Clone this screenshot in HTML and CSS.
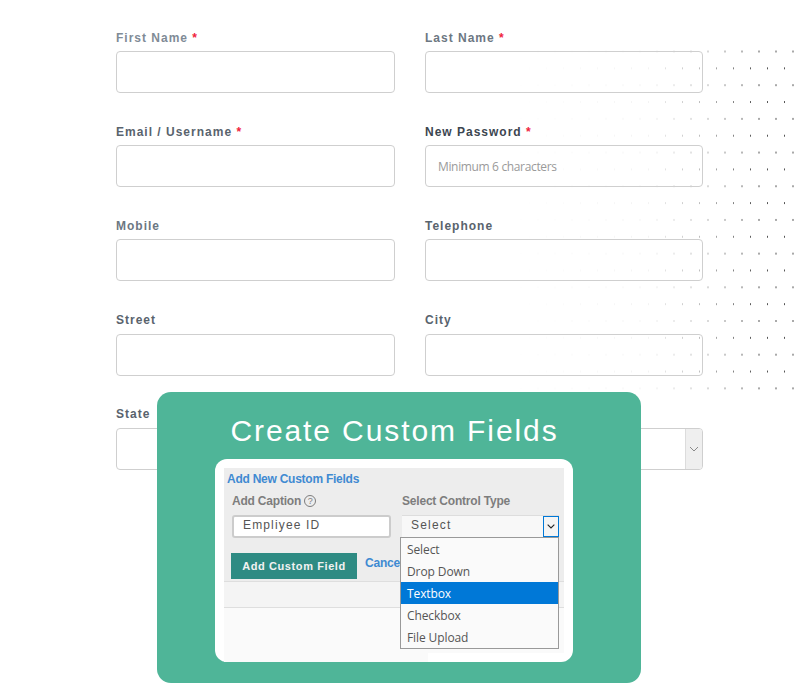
FILE: index.html
```html
<!DOCTYPE html>
<html lang="en">
<head>
<meta charset="utf-8">
<title>Create Custom Fields</title>
<link rel="stylesheet" href="styles.css">
</head>
<body>
<main class="page">
  <div class="dots" aria-hidden="true"></div>
  <form class="form-grid">
    <div class="field">
      <label class="label label-faint">First Name <span class="req">*</span></label>
      <div class="input"></div>
    </div>
    <div class="field">
      <label class="label label-mid">Last Name <span class="req">*</span></label>
      <div class="input"></div>
    </div>
    <div class="field">
      <label class="label label-dark">Email / Username <span class="req">*</span></label>
      <div class="input"></div>
    </div>
    <div class="field">
      <label class="label label-darkest">New Password <span class="req">*</span></label>
      <div class="input"><span class="placeholder">Minimum 6 characters</span></div>
    </div>
    <div class="field">
      <label class="label label-mid">Mobile</label>
      <div class="input"></div>
    </div>
    <div class="field">
      <label class="label label-dark">Telephone</label>
      <div class="input"></div>
    </div>
    <div class="field">
      <label class="label label-dark">Street</label>
      <div class="input"></div>
    </div>
    <div class="field">
      <label class="label label-dark">City</label>
      <div class="input"></div>
    </div>
    <div class="field">
      <label class="label label-dark">State</label>
      <div class="input"></div>
    </div>
    <div class="field">
      <div class="label"></div>
      <div class="input input-select">
        <span class="select-arrow">
          <svg width="10" height="6" viewBox="0 0 10 6"><polyline points="1,1 5,5 9,1" fill="none" stroke="#8a8a8a" stroke-width="1"/></svg>
        </span>
      </div>
    </div>
  </form>

  <section class="promo">
    <h1 class="promo-title">Create Custom Fields</h1>
    <div class="panel">
      <div class="panel-inner">
        <div class="band-form">
          <div class="band-title">Add New Custom Fields</div>
          <div class="cf-grid">
            <div class="cf-col cf-col-left">
              <div class="cf-label">Add Caption <span class="help">?</span></div>
              <div class="cf-input">Empliyee ID</div>
            </div>
            <div class="cf-col">
              <div class="cf-label">Select Control Type</div>
              <div class="cf-select">
                <span class="cf-select-text">Select</span>
                <span class="cf-select-btn">
                  <svg width="8" height="5" viewBox="0 0 9 6"><polyline points="0.5,0.8 4.5,4.8 8.5,0.8" fill="none" stroke="#222" stroke-width="1.3"/></svg>
                </span>
              </div>
            </div>
          </div>
          <div class="cf-actions">
            <span class="cf-btn">Add Custom Field</span>
            <span class="cf-cancel">Cancel</span>
          </div>
        </div>
        <div class="band-mid"></div>
        <div class="band-low"></div>
        <div class="band-tail"></div>
      </div>
      <ul class="dropdown">
        <li class="dropdown-item">Select</li>
        <li class="dropdown-item">Drop Down</li>
        <li class="dropdown-item dropdown-item-active">Textbox</li>
        <li class="dropdown-item">Checkbox</li>
        <li class="dropdown-item">File Upload</li>
      </ul>
    </div>
  </section>
</main>
</body>
</html>
```
FILE: styles.css
```css
* { box-sizing: border-box; }
html, body { margin: 0; padding: 0; background: #fff; }
body { font-family: "Liberation Sans", Arial, sans-serif; }

.page {
  position: relative;
  width: 800px;
  height: 700px;
  overflow: hidden;
  padding: 30.6px 97px 0 116px;
}

.dots {
  position: absolute;
  left: 500px;
  top: 40px;
  width: 300px;
  height: 355px;
  background-image:
    radial-gradient(circle at center, #555 0, #555 0.6px, transparent 1.1px),
    radial-gradient(circle at center, #555 0, #555 0.6px, transparent 1.1px);
  background-size: 17px 33.7px;
  background-position: 12.5px -5.35px, 4px 11.5px;
  -webkit-mask-image: linear-gradient(90deg, transparent 5%, rgba(0,0,0,.07) 50%, rgba(0,0,0,.45) 70%, #000 85%);
  mask-image: linear-gradient(90deg, transparent 5%, rgba(0,0,0,.07) 50%, rgba(0,0,0,.45) 70%, #000 85%);
}

.form-grid {
  position: relative;
  display: grid;
  grid-template-columns: 279px 278px;
  column-gap: 30px;
  row-gap: 31.8px;
}

.label {
  display: block;
  height: 15px;
  margin-bottom: 5.4px;
  font-size: 12px;
  line-height: 15px;
  font-weight: 700;
  letter-spacing: 1px;
  white-space: nowrap;
}
.label-faint { color: #808b96; }
.label-mid { color: #6c7782; }
.label-dark { color: #59636d; }
.label-darkest { color: #3c4650; }
.req { color: #f0223c; }

.input {
  display: flex;
  align-items: center;
  height: 42px;
  padding: 0 12px;
  border: 1px solid #cfcfcf;
  border-radius: 4px;
}
.placeholder {
  font-family: "Open Sans", sans-serif;
  font-size: 12px;
  letter-spacing: -0.35px;
  color: #9a9a9a;
}
.input-select {
  justify-content: flex-end;
  padding: 0;
}
.select-arrow {
  display: flex;
  align-items: center;
  justify-content: center;
  width: 17px;
  height: 100%;
  background: #efefef;
  border-left: 1px solid #dcdcdc;
  border-radius: 0 3px 3px 0;
}

.promo {
  position: absolute;
  left: 157px;
  top: 392px;
  width: 484px;
  height: 291px;
  background: #4fb598;
  border-radius: 14px;
}
.promo-title {
  margin: 21px 0 0;
  padding-right: 9px;
  height: 36px;
  font-size: 30px;
  line-height: 36px;
  font-weight: 400;
  letter-spacing: 1.9px;
  text-align: center;
  color: #fff;
}
.panel {
  position: relative;
  width: 358px;
  height: 203px;
  margin: 10px 0 0 58px;
  padding: 9px 9px 0;
  background: #fff;
  border-radius: 12px;
}
.panel-inner {
  display: flex;
  flex-direction: column;
  height: 194px;
}
.band-form {
  height: 114px;
  padding: 5px 3px 0;
  background: #ededed;
  border-bottom: 1px solid #dedede;
  flex: none;
}
.band-title {
  height: 13px;
  font-size: 12px;
  line-height: 13px;
  font-weight: 700;
  letter-spacing: -0.25px;
  color: #3f8ad2;
}
.cf-grid {
  display: grid;
  grid-template-columns: 175px 157px;
  margin-top: 8px;
}
.cf-col-left { padding-left: 5px; }
.cf-label {
  display: flex;
  align-items: center;
  gap: 3px;
  height: 14px;
  margin-bottom: 7px;
  font-size: 12px;
  line-height: 14px;
  font-weight: 700;
  letter-spacing: -0.2px;
  color: #7d7d7d;
}
.help {
  display: inline-flex;
  align-items: center;
  justify-content: center;
  width: 12px;
  height: 12px;
  border: 1px solid #7d7d7d;
  border-radius: 50%;
  font-size: 9px;
  line-height: 10px;
  font-weight: 400;
}
.cf-input {
  width: 159px;
  height: 23px;
  padding-left: 9px;
  background: #fff;
  border: 2px solid #cccccc;
  border-radius: 3px;
  font-size: 12px;
  line-height: 17px;
  letter-spacing: 1.15px;
  color: #555;
}
.cf-select {
  display: flex;
  justify-content: space-between;
  align-items: stretch;
  height: 22px;
  margin-top: 1px;
  background: #f8f8f8;
  border-top: 1px solid #dddddd;
}
.cf-select-text {
  padding-left: 9px;
  font-size: 12px;
  line-height: 19px;
  letter-spacing: 1.2px;
  color: #555;
}
.cf-select-btn {
  display: flex;
  align-items: center;
  justify-content: center;
  width: 16px;
  background: #f4f4f4;
  border: 1px solid #0078d7;
}
.cf-actions {
  display: flex;
  align-items: flex-start;
  gap: 8px;
  margin-top: 15px;
  padding-left: 4px;
}
.cf-btn {
  width: 126px;
  height: 26px;
  font-size: 11px;
  line-height: 27px;
  font-weight: 700;
  letter-spacing: 0.6px;
  text-align: center;
  color: #f2f2f2;
  background: #2e8b83;
}
.cf-cancel {
  margin-top: 3px;
  font-size: 12px;
  line-height: 14px;
  font-weight: 700;
  letter-spacing: -0.2px;
  color: #3f8ad2;
}
.band-mid {
  height: 26px;
  background: #f4f4f4;
  border-bottom: 1px solid #dedede;
  flex: none;
}
.band-low {
  height: 45px;
  background: #fafafa;
  flex: none;
}
.band-tail {
  width: 204px;
  height: 9px;
  background: #fafafa;
  flex: none;
}

.dropdown {
  position: absolute;
  left: 185px;
  top: 78px;
  width: 159px;
  height: 112px;
  margin: 0;
  padding: 0;
  list-style: none;
  background: #fafafa;
  border: 1px solid #999;
}
.dropdown-item {
  height: 22px;
  padding-left: 6px;
  font-family: "Open Sans", sans-serif;
  font-size: 12px;
  line-height: 24px;
  letter-spacing: -0.1px;
  color: #555;
}
.dropdown-item-active {
  background: #0078d7;
  color: #fff;
}
```
